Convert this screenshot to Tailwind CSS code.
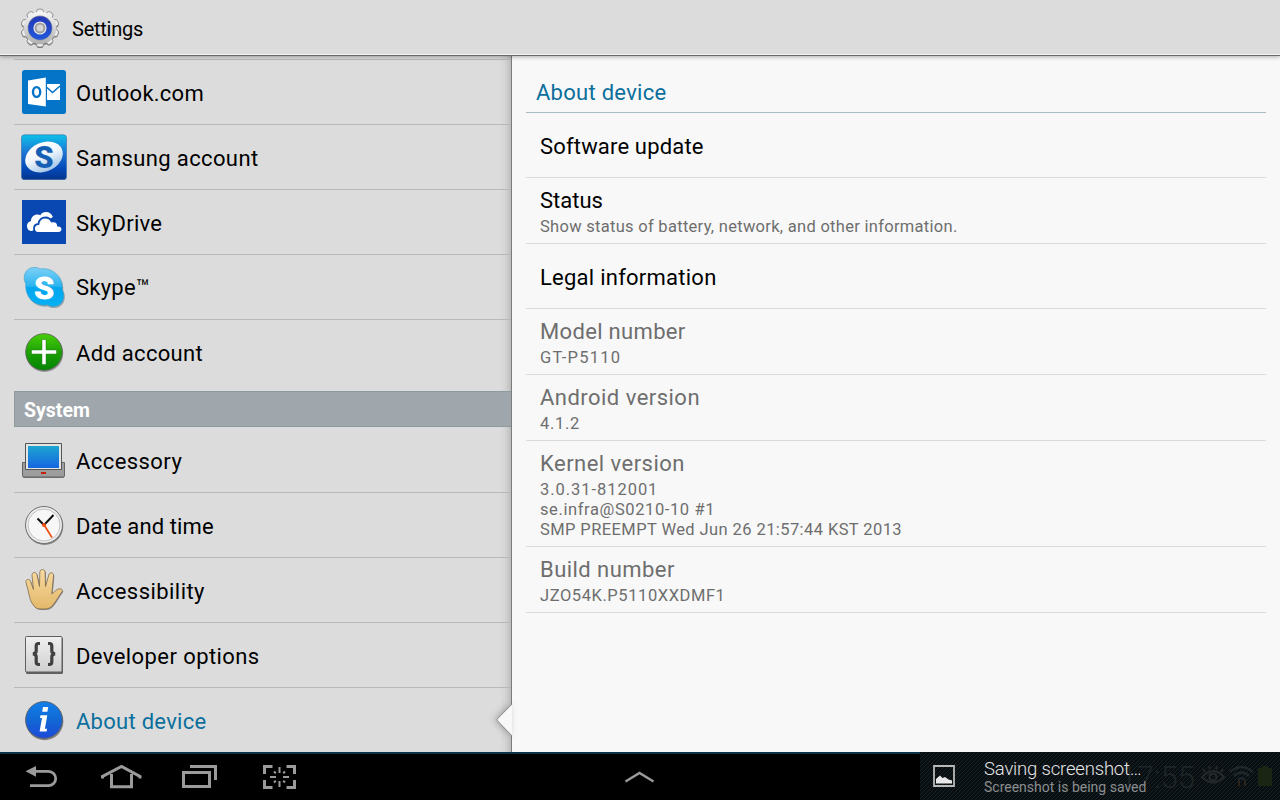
<!DOCTYPE html>
<html lang="en">
<head>
<meta charset="utf-8">
<title>Settings</title>
<script src="https://cdn.jsdelivr.net/npm/@tailwindcss/browser@4"></script>
</head>
<body class="w-[1280px] h-[800px] overflow-hidden bg-[#dcdcdc] text-black font-['Roboto',sans-serif]">
<div class="flex flex-col h-[800px]">
  <header class="relative z-10 flex items-center h-14 shrink-0 pl-5 gap-3 bg-[#dcdcdc] border-b border-[#686868] shadow-[0_1px_4px_rgba(0,0,0,.3),inset_0_-1px_0_#f4f4f4]">
    <svg width="40" height="40" viewBox="0 0 40 40">
      <defs>
        <linearGradient id="metal" x1="0" y1="0" x2="0" y2="1"><stop offset="0" stop-color="#f8f8f8"/><stop offset=".5" stop-color="#d4d4d4"/><stop offset="1" stop-color="#b0b0b0"/></linearGradient>
        <linearGradient id="blueRing" x1="0" y1="0" x2="0" y2="1"><stop offset="0" stop-color="#2438b4"/><stop offset="1" stop-color="#2258dc"/></linearGradient>
        <g id="teeth"><rect x="16.600" y="1" width="6.800" height="38" rx="2.500"/></g>
      </defs>
      <g fill="#6c6c6c" transform="translate(0 1)"><use href="#teeth"/><use href="#teeth" transform="rotate(36 20 20)"/><use href="#teeth" transform="rotate(72 20 20)"/><use href="#teeth" transform="rotate(108 20 20)"/><use href="#teeth" transform="rotate(144 20 20)"/><circle cx="20" cy="20" r="16.500"/></g>
      <g fill="#ececec" stroke="#858585" stroke-width=".8"><use href="#teeth"/><use href="#teeth" transform="rotate(36 20 20)"/><use href="#teeth" transform="rotate(72 20 20)"/><use href="#teeth" transform="rotate(108 20 20)"/><use href="#teeth" transform="rotate(144 20 20)"/></g>
      <circle cx="20" cy="20" r="16.300" fill="url(#metal)"/>
      <circle cx="20" cy="20" r="12.400" fill="#8e95a8"/>
      <circle cx="20" cy="20" r="11.800" fill="url(#blueRing)"/>
      <circle cx="20" cy="20" r="6.600" fill="#dde0e6"/>
      <circle cx="20" cy="20" r="4.400" fill="#d4d4d4" stroke="#999" stroke-width="1.700"/>
    </svg>
    <h1 class="text-[20px] tracking-[-.24px] pt-0.5">Settings</h1>
  </header>

  <main class="flex flex-1 min-h-0">
    <nav class="w-[512px] shrink-0 pl-3.5 pt-[3px] bg-[linear-gradient(to_right,#dcdcdc_500px,#d2d2d2_506px,#bcbcbc_511px)] border-r border-[#7c7c7c] text-[22px]">
      <ul class="border-t border-[#b9b9b9]">
        <li class="flex items-center h-[65px] border-b border-[#b9b9b9] pl-2 gap-2.5">
          <svg width="44" height="44" viewBox="0 0 44 44"><rect width="44" height="44" rx="2.500" fill="#0474c8"/><path d="M24 14h14v16H24z" fill="#fff"/><path d="M25 17.500l5.500 5L38 16" fill="none" stroke="#0474c8" stroke-width="1.600"/><path d="M6 10.500 24 7.500v29L6 34z" fill="#fff"/><path d="M24.400 8v28" stroke="#0474c8" stroke-width="1.200"/><ellipse cx="14.600" cy="22" rx="3.600" ry="4.900" fill="none" stroke="#0474c8" stroke-width="2.400"/></svg>
          <span class="pt-0.5 tracking-[.25px]">Outlook.com</span>
        </li>
        <li class="flex items-center h-[65px] border-b border-[#b9b9b9] pl-[7px] gap-[9px]">
          <svg width="46" height="46" viewBox="0 0 46 46"><defs><linearGradient id="sam" x1="0" y1="0" x2="0" y2="1"><stop offset="0" stop-color="#0cc0e8"/><stop offset=".4" stop-color="#1c74d4"/><stop offset=".75" stop-color="#0449b8"/><stop offset="1" stop-color="#06348c"/></linearGradient><linearGradient id="samo" x1="0" y1="0" x2="0" y2="1"><stop offset="0" stop-color="#fff"/><stop offset=".45" stop-color="#f0f6fc"/><stop offset="1" stop-color="#a4c6e8"/></linearGradient></defs><rect x=".5" y=".8" width="45" height="45" rx="3" fill="url(#sam)" stroke="#3b6ea8" stroke-opacity=".6"/><ellipse cx="23" cy="23" rx="19.500" ry="14.500" transform="rotate(-24 23 23)" fill="url(#samo)"/><text x="23" y="34" text-anchor="middle" font-family="Roboto" font-weight="900" font-size="31" fill="#1460b4">S</text></svg>
          <span class="pt-0.5 tracking-[.38px]">Samsung account</span>
        </li>
        <li class="flex items-center h-[65px] border-b border-[#b9b9b9] pl-2 gap-2.5">
          <svg width="44" height="44" viewBox="0 0 44 44"><path fill="#0948b2" d="M0 0h44v44H0z"/><path fill="#fff" d="M10 31c-3 0-5-2-5-5 0-2.500 1.500-4.500 4-5 0-4 3-6.500 6.500-6.500 1 0 2 .2 2.800.7C19.500 13 21.500 12 24 12c3.500 0 6 2 6.800 5z"/><path fill="#fff" stroke="#0948b2" stroke-width="1.800" d="M16 32.800c-2.500 0-4-2-4-4.300 0-2.500 1.800-4.300 4.500-4.500.3-4 3.200-6.500 7-6.500 2.800 0 5 1.500 6.200 4 3.500-1 6.300 1 6.300 4 2.500 0 4.300 1.500 4.300 3.700 0 2-1.800 3.600-4 3.600z"/></svg>
          <span class="pt-0.5 tracking-[.28px]">SkyDrive</span>
        </li>
        <li class="flex items-center h-[65px] border-b border-[#b9b9b9] pl-2 gap-2.5">
          <svg width="44" height="44" viewBox="0 0 44 44"><defs><linearGradient id="sky" x1="0" y1="0" x2="0" y2="1"><stop offset="0" stop-color="#7dd0f6"/><stop offset=".48" stop-color="#2bb4f0"/><stop offset=".52" stop-color="#02a6ee"/><stop offset="1" stop-color="#04b0f4"/></linearGradient></defs><g transform="translate(-.3 .4) scale(1.012)"><path d="M3 12C3 6 7.500 2.500 13 2.500c2 0 4 .5 5.500 1.500C30 2 42 11 40.500 24c1 2 1.500 3.500 1.500 6 0 7-5 11-11 11-2 0-4-.5-5.500-1.500C12 41 3.500 31 4.500 18 3.500 16.500 3 14 3 12z" fill="#7f8b92" opacity=".7" transform="translate(.6 1.200)"/><path d="M2.500 12C2.500 6 7 2 12.500 2c2 0 4 .5 5.500 1.500C30 1.500 41.500 11 40 24c1 2 1.500 3.500 1.500 5.500C41.500 37 37 40.500 31 40.500c-2 0-4-.5-5.500-1.500C12 41 3 31 4 18c-1-1.500-1.500-4-1.500-6z" fill="url(#sky)" stroke="#3c9fce" stroke-width=".6"/></g><text x="22" y="33.500" text-anchor="middle" font-family="Roboto" font-weight="700" font-size="32" fill="#fff" stroke="#fff">S</text></svg>
          <span class="tracking-[.25px]">Skype™</span>
        </li>
        <li class="flex items-center h-[65px] pl-2 gap-2.5">
          <svg class="-mt-px" width="44" height="44" viewBox="0 0 44 44"><defs><linearGradient id="grn" x1="0" y1="0" x2="0" y2="1"><stop offset="0" stop-color="#48d008"/><stop offset=".5" stop-color="#1ca004"/><stop offset="1" stop-color="#048404"/></linearGradient></defs><circle cx="22.500" cy="23.300" r="18.700" fill="#777" opacity=".7"/><circle cx="22" cy="22" r="18.300" fill="url(#grn)" stroke="#5a6458" stroke-width=".9"/><path d="M20 9.500h4V20h10.500v4H24v10.500h-4V24H9.500v-4H20z" fill="#fff" stroke="#2b7a20" stroke-width=".5"/></svg>
          <span class="pt-0.5 tracking-[.3px]">Add account</span>
        </li>
      </ul>
      <h2 class="mt-1.5 h-9 flex items-center pl-[9px] pt-[3px] bg-[#9fa7ac] border border-r-0 border-[#8f9a9f] text-white text-[19.500px] font-bold">System</h2>
      <ul class="mt-px">
        <li class="flex items-center h-[65px] border-b border-[#b9b9b9] pl-2 gap-2.5">
          <svg class="mt-0.5" width="44" height="44" viewBox="0 0 44 44"><defs><linearGradient id="scr" x1="0" y1="0" x2="0" y2="1"><stop offset="0" stop-color="#1da5d0"/><stop offset="1" stop-color="#1666e0"/></linearGradient></defs><path d="M.5 24h42v13a2 2 0 0 1-2 2h-38a2 2 0 0 1-2-2z" fill="#777"/><path d="M.5 23.500h4v-2h34v2h4v13a1.500 1.500 0 0 1-1.500 1.500H2a1.500 1.500 0 0 1-1.500-1.500z" fill="#9d9d9d" stroke="#646464"/><path d="M3.500 4.500h36v26h-36z" fill="#e4e4e4" stroke="#555"/><path d="M6 7h31v22H6z" fill="url(#scr)"/><path d="M19 33h5v2h-5z" fill="#c4200c"/></svg>
          <span class="pt-0.5 tracking-[.43px]">Accessory</span>
        </li>
        <li class="flex items-center h-[65px] border-b border-[#b9b9b9] pl-2 gap-2.5">
          <svg width="44" height="44" viewBox="0 0 44 44"><circle cx="22.500" cy="23.200" r="18.800" fill="#707070" opacity=".8"/><circle cx="22" cy="22" r="18.500" fill="#ececec" stroke="#707070"/><circle cx="22" cy="22" r="16" fill="#f7f7f7" stroke="#c2c2c2"/><path d="M15.500 15.500 22 22l9.500-10" fill="none" stroke="#111" stroke-width="2"/><path d="m21.500 21 8.500 13.500" stroke="#ee5010" stroke-width="1.700"/><circle cx="22" cy="22" r="2" fill="#ee5010"/></svg>
          <span class="pt-0.5 tracking-[.12px]">Date and time</span>
        </li>
        <li class="flex items-center h-[65px] border-b border-[#b9b9b9] pl-2 gap-2.5">
          <svg width="44" height="44" viewBox="0 0 44 44"><defs><linearGradient id="hnd" x1="0" y1="0" x2="0" y2="1"><stop offset="0" stop-color="#f8dba0"/><stop offset="1" stop-color="#e3b86b"/></linearGradient><path id="palm" d="M13 39C8.500 34.500 7.500 29 6.500 24L4 14.500c-.7-3.300 3.500-4.300 4.500-1.200l3 8.200L10 7.500c-.3-3.500 4.300-4.200 5-.7l2.500 11.700.3-14.200c.1-3.700 5.200-3.700 5.300 0l.4 14.200L26.800 7c.8-3.400 5.200-2.500 4.700.8L29.800 26c1.700-1 3.200-3.500 6-4.800 2.200-1 6 .2 4.200 2.600-3 3.700-5.500 9.200-9.500 13.700-2.500 2.800-4.500 3.500-8.500 3.500-4.500 0-7 0-9-2z"/></defs><use href="#palm" fill="#555" opacity=".6" transform="translate(.8 1)"/><use href="#palm" fill="url(#hnd)" stroke="#7d694a" stroke-width=".8"/></svg>
          <span class="pt-0.5 tracking-[.45px]">Accessibility</span>
        </li>
        <li class="flex items-center h-[65px] border-b border-[#b9b9b9] pl-2 gap-2.5">
          <svg class="-mt-px" width="44" height="44" viewBox="0 0 44 44"><defs><linearGradient id="dev" x1="0" y1="0" x2="0" y2="1"><stop offset="0" stop-color="#f0f0f0"/><stop offset="1" stop-color="#cfcfcf"/></linearGradient></defs><rect x="4" y="4.500" width="37" height="36.500" rx="1.500" fill="#606060"/><rect x="3.500" y="3.500" width="36.500" height="35.500" rx="1" fill="url(#dev)" stroke="#5f5f5f"/><path d="M18 10.500h-1.500c-1.600 0-2.300.8-2.300 2.400v5c0 1.600-1.200 2.600-3.200 2.900 2 .3 3.200 1.300 3.200 2.900v5.400c0 1.600.7 2.400 2.300 2.400H18M26 10.500h1.500c1.600 0 2.300.8 2.300 2.400v5c0 1.600 1.200 2.600 3.200 2.900-2 .3-3.200 1.300-3.200 2.900v5.400c0 1.600-.7 2.400-2.300 2.400H26" fill="none" stroke="#404040" stroke-width="3.200"/></svg>
          <span class="pt-0.5 tracking-[.42px]">Developer options</span>
        </li>
        <li class="relative flex items-center h-[65px] pl-2 gap-2.5 text-[#0b6f9c]">
          <svg class="-mt-px" width="44" height="44" viewBox="0 0 44 44"><defs><linearGradient id="inf" x1="0" y1="0" x2="0" y2="1"><stop offset="0" stop-color="#1180ea"/><stop offset=".5" stop-color="#1268d4"/><stop offset="1" stop-color="#1c48d8"/></linearGradient></defs><circle cx="22.600" cy="23.400" r="18.800" fill="#6b6b6b" opacity=".8"/><circle cx="22" cy="22" r="18.400" fill="url(#inf)" stroke="#5d6470"/><path d="M21 9h5.200l-.8 4.800h-5.200zM18.500 17.200h6.800l-2.400 13.600h2.200l-.5 2.700h-7l2.400-13.600h-2z" fill="#fff"/></svg>
          <span class="pt-0.5 tracking-[.27px]">About device</span>
          <svg class="absolute -right-px top-3 drop-shadow-[-2px_0_3px_rgba(0,0,0,.25)]" width="16" height="40" viewBox="0 0 16 40"><path d="M16 4.500 1.500 18.800Q.6 19.800 1.500 20.800L16 35.500z" fill="#f8f8f8"/><path d="M15.500 4.500 1.500 18.800Q.6 19.800 1.500 20.800L15.500 35.500" fill="none" stroke="#8c8c8c"/></svg>
        </li>
      </ul>
    </nav>

    <section class="flex-1 bg-[#f8f8f8] px-3.5 text-[22px] text-[#6e6e6e]">
      <h2 class="h-[57px] pt-5 pl-2.5 border-b border-[#a8bcc4] text-[#0b6f9c] tracking-[.27px]">About device</h2>
      <div class="h-[65px] flex items-center pl-3.5 pt-0.5 border-b border-[#dadada] text-black tracking-[.17px]">Software update</div>
      <div class="h-[66px] pl-3.5 pt-2 border-b border-[#dadada]"><h3 class="leading-[30px] text-black">Status</h3><p class="text-[16.500px] leading-5 pt-px tracking-[.29px]">Show status of battery, network, and other information.</p></div>
      <div class="h-[65px] flex items-center pl-3.5 pt-0.5 border-b border-[#dadada] text-black tracking-[.25px]">Legal information</div>
      <div class="h-[66px] pl-3.5 pt-2 border-b border-[#dadada]"><h3 class="leading-[30px] tracking-[.33px]">Model number</h3><p class="text-[16.500px] leading-5 pt-px tracking-[1.250px]">GT-P5110</p></div>
      <div class="h-[66px] pl-3.5 pt-2 border-b border-[#dadada]"><h3 class="leading-[30px] tracking-[.47px]">Android version</h3><p class="text-[16.500px] leading-5 pt-px tracking-[.7px]">4.1.2</p></div>
      <div class="h-[106px] pl-3.5 pt-2 border-b border-[#dadada]"><h3 class="leading-[30px] tracking-[.47px]">Kernel version</h3><p class="text-[16.500px] leading-5 pt-px"><span class="tracking-[.95px]">3.0.31-812001</span><br><span class="tracking-[.6px]">se.infra@S0210-10 #1</span><br><span class="tracking-[.41px]">SMP PREEMPT Wed Jun 26 21:57:44 KST 2013</span></p></div>
      <div class="h-[66px] pl-3.5 pt-2 border-b border-[#dadada]"><h3 class="leading-[30px] tracking-[.45px]">Build number</h3><p class="text-[16.500px] leading-5 pt-px tracking-[.57px]">JZO54K.P5110XXDMF1</p></div>
    </section>
  </main>

  <footer class="h-12 shrink-0 flex bg-black">
    <div class="w-[920px] flex items-center border-t-2 border-[#0c3347] pl-[23px] pb-px">
      <svg class="mr-[41px]" width="36" height="28" viewBox="24 763 36 28" fill="none" stroke="#9b9b9b" stroke-width="2.800"><path d="M34 771.300h15.500a7.200 7.200 0 0 1 0 14.400H31"/><path d="M26.500 771.300 37 766v10.800z" fill="#9b9b9b" stroke="none"/></svg>
      <svg class="mr-[39px]" width="42" height="28" viewBox="100 763 42 28" fill="none" stroke="#9b9b9b" stroke-width="3"><path d="M102.500 778.500v-2L121.500 766.500 140 776.500v2M111.500 774v12.700h20V774"/></svg>
      <svg class="mr-[42px]" width="38" height="28" viewBox="182 763 38 28" fill="none" stroke="#9b9b9b" stroke-width="3"><path d="M184.500 772.500h26v14h-26zM191 766.500h25.500V780"/></svg>
      <svg width="36" height="28" viewBox="261 763 36 28" fill="none" stroke="#9b9b9b"><path d="M264.500 774v-7.500h8M286.500 766.500h8v7.500M264.500 780v7.500h8M286.500 787.500h8V780" stroke-width="3"/><path d="M279.500 767v6M279.500 781v6M270 777h6M283 777h6M274 771.500l1.800 1.800M285 771.500l-1.800 1.800M274 782.500l1.800-1.800M285 782.500l-1.800-1.800" stroke-width="2"/></svg>
      <svg class="ml-[327px]" width="32" height="14" viewBox="625 769 32 14" fill="none" stroke="#9b9b9b" stroke-width="2.400"><path d="M626.500 780.500 640.500 772 654.500 780.500"/></svg>
    </div>
    <div class="relative w-[360px] flex items-center pl-[13px] bg-[repeating-linear-gradient(135deg,#0a0d0f_0px,#0a0d0f_1.828px,#15252a_1.828px,#15252a_2.828px)]">
      <div class="absolute right-2 top-0 h-12 flex items-center gap-1 text-[#1e2528]">
        <span class="text-[31px] font-light pt-1 pr-0.5">17:55</span>
        <svg width="24" height="22" viewBox="0 0 24 22" fill="none" stroke="#242a2c" stroke-width="2"><path d="M1 12q11-12 22 0-11 11-22 0zM4 7 2 4M9 4 8 1M15 4l1-3M20 7l2-3"/><circle cx="12" cy="12" r="3.500"/></svg>
        <svg width="25" height="22" viewBox="0 0 25 22" fill="none" stroke="#20272a" stroke-width="2.400"><path d="M1 7q11.500-10 23 0M5 11q7.500-7 15 0M9 15q3.500-3.500 7 0"/><path d="M10 15v6M16 15v6" stroke="#2a2419" stroke-width="2"/></svg>
        <svg width="14" height="20" viewBox="0 0 14 20"><path d="M0 2h4V0h6v2h4v18H0z" fill="#1a2613"/></svg>
      </div>
      <svg width="22" height="22" viewBox="0 0 22 22"><path d="M1 1h20v20H1z" fill="none" stroke="#b8b8b8" stroke-width="1.800"/><path d="M3 18.500V14l4-3.500 2.500 2.500 2.500-1 3.500 2.500 3.500 1v3z" fill="#e8e8e8"/></svg>
      <div class="relative ml-[29px]">
        <p class="text-[18.500px] font-light leading-5 text-[#e6e6e6] pt-px whitespace-nowrap tracking-[-.18px]">Saving screenshot…</p>
        <p class="text-[14px] leading-4 text-[#8a8e8f] whitespace-nowrap">Screenshot is being saved</p>
      </div>
    </div>
  </footer>
</div>
</body>
</html>
